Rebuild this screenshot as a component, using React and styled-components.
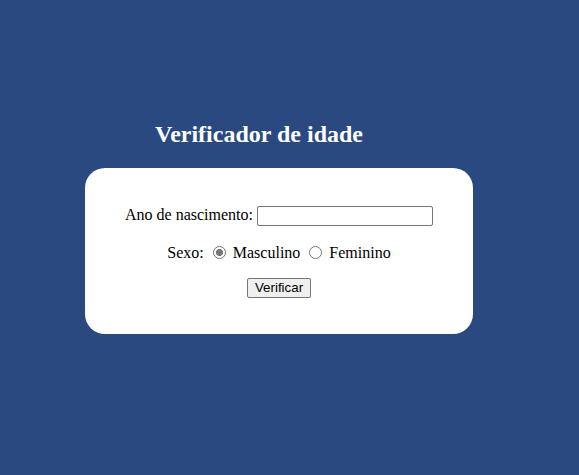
import React, { useState } from 'react';
import styled, { createGlobalStyle } from 'styled-components';

const GlobalStyle = createGlobalStyle`
  html, body {
    margin: 0;
    padding: 0;
    background: #294980;
  }
  body {
    font-family: "Liberation Serif", "Times New Roman", serif;
    font-size: 16px;
    color: #000;
  }
`;

const Page = styled.div`
  min-height: 475px;
  padding: 119px 0 0 85px;
  box-sizing: border-box;
`;

const Title = styled.h2`
  width: 348px;
  margin: 0 0 19px;
  text-align: center;
  color: #fff;
  font-size: 24px;
  font-weight: bold;
  line-height: 30px;
`;

const Card = styled.form`
  width: 388px;
  height: 166px;
  box-sizing: border-box;
  padding-top: 36px;
  background: #fff;
  border-radius: 20px;
  display: flex;
  flex-direction: column;
  align-items: center;
`;

const Row = styled.div`
  text-align: center;
  height: ${(p) => p.$h}px;
  line-height: ${(p) => p.$h}px;
  margin-bottom: ${(p) => p.$mb}px;
  white-space: nowrap;
`;

const TextInput = styled.input`
  width: 176px;
  height: 20px;
  box-sizing: border-box;
  margin: 0;
  vertical-align: middle;
  border: 1px solid #767676;
  border-radius: 2px;
  padding: 1px 2px;
  font-family: "Liberation Sans", Arial, sans-serif;
  font-size: 13.33px;
`;

const Radio = styled.input`
  appearance: none;
  width: 13px;
  height: 13px;
  margin: 0 3px 0 5px;
  vertical-align: -1px;
  border: 1px solid #767676;
  border-radius: 50%;
  background: #fff;
  box-sizing: border-box;

  &:checked {
    border-color: #6f6f6f;
    background: radial-gradient(circle, #777 0 3.3px, #fff 3.8px);
  }
`;

const Button = styled.button`
  height: 20px;
  padding: 0 7px;
  margin-top: 1px;
  vertical-align: top;
  box-sizing: border-box;
  border: 1px solid #767676;
  border-radius: 2px;
  background: #efefef;
  color: #000;
  font-family: "Liberation Sans", Arial, sans-serif;
  font-size: 13.33px;
  line-height: 16px;
`;

export default function App() {
  const [sexo, setSexo] = useState('m');
  return (
    <>
      <GlobalStyle />
      <Page>
        <Title>Verificador de idade</Title>
        <Card onSubmit={(e) => e.preventDefault()}>
          <Row $h={21} $mb={19}>
            <label htmlFor="ano">Ano de nascimento:</label>{' '}
            <TextInput id="ano" type="number" />
          </Row>
          <Row $h={18} $mb={15}>
            Sexo:{' '}
            <Radio
              type="radio"
              name="sexo"
              id="masc"
              checked={sexo === 'm'}
              onChange={() => setSexo('m')}
            />{' '}
            <label htmlFor="masc">Masculino</label>{' '}
            <Radio
              type="radio"
              name="sexo"
              id="fem"
              checked={sexo === 'f'}
              onChange={() => setSexo('f')}
            />{' '}
            <label htmlFor="fem">Feminino</label>
          </Row>
          <Row $h={21} $mb={0}>
            <Button type="button">Verificar</Button>
          </Row>
        </Card>
      </Page>
    </>
  );
}
